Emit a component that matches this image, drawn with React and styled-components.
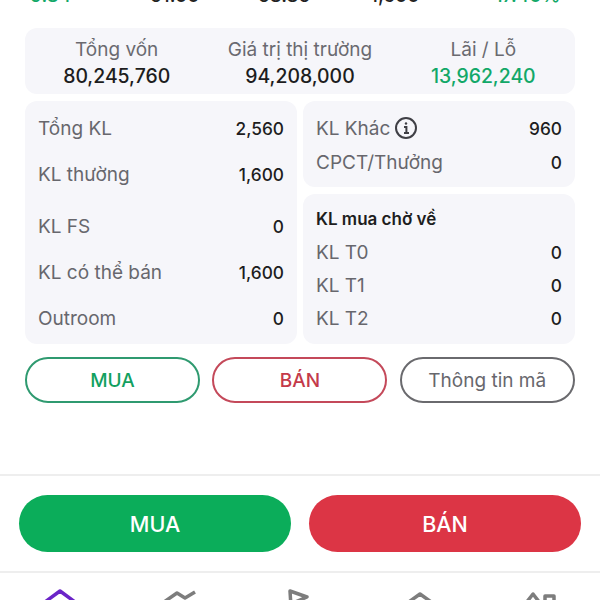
import styled, { createGlobalStyle } from "styled-components"

const GlobalStyle = createGlobalStyle`
    html, body {
        margin : 0;
        padding : 0;
        background : #fff;
        font-family : Inter, "Noto Sans", sans-serif;
    }
`
const Page = styled.div`
    width : 600px;
    height : 600px;
    overflow : hidden;
    display : flex;
    flex-direction : column;
    & > * {
        flex : none;
    }
`
const Ticker = styled.div`
    height : 42px;
    margin-top : -14px;
    padding-left : 30px;
    display : grid;
    grid-template-columns : 120px 108px 112px 112px 1fr;
    font-size : 19px;
    font-weight : 500;
    line-height : 20px;
`
const TickerCell = styled.span`
    color : ${p => p.$green ? "#12a868" : "#222"};
`
const Content = styled.div`
    padding : 0 25px;
    display : flex;
    flex-direction : column;
    gap : 7px;
`
const Summary = styled.div`
    height : 66px;
    padding-top : 4px;
    box-sizing : border-box;
    border-radius : 12px;
    background : #f6f6fa;
    display : grid;
    grid-template-columns : repeat(3, 1fr);
    align-items : center;
    text-align : center;
`
const SummaryItem = styled.div`
    display : flex;
    flex-direction : column;
    gap : 3px;
`
const SummaryLabel = styled.span`
    font-size : 19px;
    line-height : 23px;
    color : #6a6a70;
`
const SummaryValue = styled.span`
    font-size : 19.4px;
    line-height : 24px;
    font-weight : 500;
    color : ${p => p.$green ? "#12a868" : "#1d1d20"};
`
const Columns = styled.div`
    display : grid;
    grid-template-columns : 272px 272px;
    gap : 6px;
`
const Side = styled.div`
    display : flex;
    flex-direction : column;
    gap : 7px;
`
const Card = styled.div`
    border-radius : 12px;
    background : #f6f6fa;
    padding : ${p => p.$padding};
    height : ${p => p.$height}px;
    display : flex;
    flex-direction : column;
    box-sizing : border-box;
`
const Row = styled.div`
    height : ${p => p.$height}px;
    margin-top : ${p => p.$offset || 0}px;
    flex : none;
    display : flex;
    align-items : center;
    justify-content : space-between;
`
const Label = styled.span`
    font-size : 19px;
    color : #67676d;
    display : flex;
    align-items : center;
    gap : 4px;
`
const Value = styled.span`
    font-size : 17.3px;
    font-weight : 500;
    color : #1d1d20;
`
const PendingTitle = styled.div`
    font-size : 17px;
    font-weight : 600;
    line-height : 24px;
    margin-bottom : 5px;
    color : #1d1d20;
`
const ActionRow = styled.div`
    display : grid;
    grid-template-columns : repeat(3, 175px);
    column-gap : 12.4px;
    margin-top : 6px;
`
const OutlineButton = styled.button`
    height : 46px;
    border-radius : 23px;
    background : #fff;
    border : 2px solid ${p => p.$color};
    color : ${p => p.$text};
    font-family : inherit;
    font-size : 19px;
    font-weight : ${p => p.$weight || 500};
    padding : 0;
`
const Footer = styled.div`
    margin-top : 71px;
    border-top : 2px solid #eeeeee;
    height : 97px;
    padding : 19px 19px 0;
    box-sizing : border-box;
    display : grid;
    grid-template-columns : 272px 272px;
    justify-content : space-between;
`
const BigButton = styled.button`
    height : 57px;
    border : none;
    border-radius : 29px;
    background : ${p => p.$color};
    color : #fff;
    font-family : inherit;
    font-size : 21.5px;
    font-weight : 500;
    padding : 0;
`
const TabBar = styled.div`
    border-top : 2px solid #eeeeee;
    height : 41px;
    display : grid;
    grid-template-columns : repeat(5, 120px);
    justify-items : center;
    padding-top : 13px;
    box-sizing : border-box;
`
const TabIcon = styled.svg`
    width : 40px;
    height : 40px;
    fill : none;
    stroke : ${p => p.$active ? "#6b24c8" : "#7d7d7d"};
    stroke-width : 3.5;
    stroke-linejoin : round;
`
const InfoIcon = () => (
    <svg width="24" height="24" viewBox="0 0 24 24" fill="none" stroke="#3f3f45" strokeWidth="2">
        <circle cx="12" cy="12" r="10" />
        <path d="M10 11h2.4v6M10 17h5" />
        <circle cx="12" cy="7.5" r="1.2" fill="#3f3f45" stroke="none" />
    </svg>
)
const leftRows = [
    { label: "Tổng KL", value: "2,560" },
    { label: "KL thường", value: "1,600" },
    { label: "KL FS", value: "0", offset: 6 },
    { label: "KL có thể bán", value: "1,600" },
    { label: "Outroom", value: "0" },
]
const pendingRows = [
    { label: "KL T0", value: "0" },
    { label: "KL T1", value: "0" },
    { label: "KL T2", value: "0" },
]
const App = () => {
    return (
        <Page>
            <GlobalStyle />
            <Ticker>
                <TickerCell $green>9.84</TickerCell>
                <TickerCell>51.00</TickerCell>
                <TickerCell>58.85</TickerCell>
                <TickerCell>1,600</TickerCell>
                <TickerCell $green>+17.40%</TickerCell>
            </Ticker>
            <Content>
                <Summary>
                    <SummaryItem><SummaryLabel>Tổng vốn</SummaryLabel><SummaryValue>80,245,760</SummaryValue></SummaryItem>
                    <SummaryItem><SummaryLabel>Giá trị thị trường</SummaryLabel><SummaryValue>94,208,000</SummaryValue></SummaryItem>
                    <SummaryItem><SummaryLabel>Lãi / Lỗ</SummaryLabel><SummaryValue $green>13,962,240</SummaryValue></SummaryItem>
                </Summary>
                <Columns>
                    <Card $height={243} $padding="4px 13px 0">
                        {leftRows.map(row => (
                            <Row key={row.label} $height={46} $offset={row.offset}>
                                <Label>{row.label}</Label>
                                <Value>{row.value}</Value>
                            </Row>
                        ))}
                    </Card>
                    <Side>
                        <Card $height={86} $padding="10px 13px 0">
                            <Row $height={34}><Label>KL Khác <InfoIcon /></Label><Value>960</Value></Row>
                            <Row $height={34}><Label>CPCT/Thưởng</Label><Value>0</Value></Row>
                        </Card>
                        <Card $height={150} $padding="13px 13px 0">
                            <PendingTitle>KL mua chờ về</PendingTitle>
                            {pendingRows.map(row => (
                                <Row key={row.label} $height={33}>
                                    <Label>{row.label}</Label>
                                    <Value>{row.value}</Value>
                                </Row>
                            ))}
                        </Card>
                    </Side>
                </Columns>
                <ActionRow>
                    <OutlineButton $color="#2f9a70" $text="#12a060">MUA</OutlineButton>
                    <OutlineButton $color="#c4495a" $text="#c43a4a">BÁN</OutlineButton>
                    <OutlineButton $color="#6a6a6e" $text="#67676d" $weight={400}>Thông tin mã</OutlineButton>
                </ActionRow>
            </Content>
            <Footer>
                <BigButton $color="#0bad5a">MUA</BigButton>
                <BigButton $color="#dc3545">BÁN</BigButton>
            </Footer>
            <TabBar>
                <TabIcon $active viewBox="0 0 40 40"><path d="M5 16 20 5l15 11v20H5z" /></TabIcon>
                <TabIcon viewBox="0 0 40 40"><path d="M4 16 17 7l8 5 10-6" /></TabIcon>
                <TabIcon viewBox="0 0 40 40"><path d="M12 36 10 5l17 6-14 6" /></TabIcon>
                <TabIcon viewBox="0 0 40 40"><path d="M6 18 20 8l14 10v18H6z" /></TabIcon>
                <TabIcon viewBox="0 0 40 40"><path d="M6 17 13 8l7 9v19H6zM25 20V10h9v10" /></TabIcon>
            </TabBar>
        </Page>
    )
}
export default App
